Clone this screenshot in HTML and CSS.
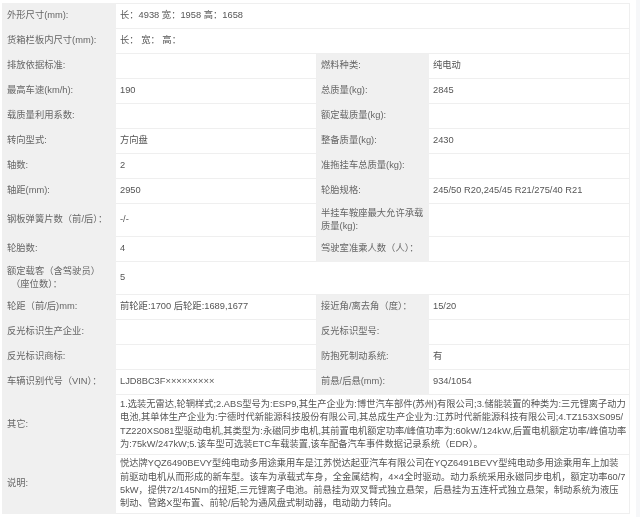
FILE: index.html
```html
<!DOCTYPE html>
<html lang="zh">
<head>
<meta charset="utf-8">
<title>车辆参数</title>
<link rel="stylesheet" href="styles.css">
</head>
<body>
<table class="spec">
<colgroup><col class="c1"><col class="c2"><col class="c3"><col class="c4"></colgroup>
<tr class="r25"><th>外形尺寸(mm):</th><td colspan="3">长：4938 宽：1958 高：1658</td></tr>
<tr class="r25"><th>货箱栏板内尺寸(mm):</th><td colspan="3">长： 宽： 高：</td></tr>
<tr class="r25"><th>排放依据标准:</th><td></td><th>燃料种类:</th><td>纯电动</td></tr>
<tr class="r25"><th>最高车速(km/h):</th><td>190</td><th>总质量(kg):</th><td>2845</td></tr>
<tr class="r25"><th>载质量利用系数:</th><td></td><th>额定载质量(kg):</th><td></td></tr>
<tr class="r25"><th>转向型式:</th><td>方向盘</td><th>整备质量(kg):</th><td>2430</td></tr>
<tr class="r25"><th>轴数:</th><td>2</td><th>准拖挂车总质量(kg):</th><td></td></tr>
<tr class="r25"><th>轴距(mm):</th><td>2950</td><th>轮胎规格:</th><td>245/50 R20,245/45 R21/275/40 R21</td></tr>
<tr class="r33"><th>钢板弹簧片数（前/后）：</th><td>-/-</td><th>半挂车鞍座最大允许承载<br>质量(kg):</th><td></td></tr>
<tr class="r25"><th>轮胎数:</th><td>4</td><th>驾驶室准乘人数（人）：</th><td></td></tr>
<tr class="r33"><th>额定载客（含驾驶员）<br><span class="indent">（座位数）：</span></th><td colspan="3">5</td></tr>
<tr class="r25"><th>轮距（前/后)mm:</th><td>前轮距:1700 后轮距:1689,1677</td><th>接近角/离去角（度）：</th><td>15/20</td></tr>
<tr class="r25"><th>反光标识生产企业:</th><td></td><th>反光标识型号:</th><td></td></tr>
<tr class="r25"><th>反光标识商标:</th><td></td><th>防抱死制动系统:</th><td>有</td></tr>
<tr class="r25"><th>车辆识别代号（VIN）：</th><td>LJD8BC3F×××××××××</td><th>前悬/后悬(mm):</th><td>934/1054</td></tr>
<tr class="r60"><th>其它:</th><td colspan="3" class="long">1.选装无雷达,轮辋样式;2.ABS型号为:ESP9,其生产企业为:博世汽车部件(苏州)有限公司;3.储能装置的种类为:三元锂离子动力<br>电池,其单体生产企业为:宁德时代新能源科技股份有限公司,其总成生产企业为:江苏时代新能源科技有限公司;4.TZ153XS095/<br>TZ220XS081型驱动电机,其类型为:永磁同步电机,其前置电机额定功率/峰值功率为:60kW/124kW,后置电机额定功率/峰值功率<br>为:75kW/247kW;5.该车型可选装ETC车载装置,该车配备汽车事件数据记录系统（EDR）。</td></tr>
<tr class="r59"><th>说明:</th><td colspan="3" class="long">悦达牌YQZ6490BEVY型纯电动多用途乘用车是江苏悦达起亚汽车有限公司在YQZ6491BEVY型纯电动多用途乘用车上加装<br>前驱动电机从而形成的新车型。该车为承载式车身，全金属结构，4×4全时驱动。动力系统采用永磁同步电机，额定功率60/7<br>5kW，提供72/145Nm的扭矩,三元锂离子电池。前悬挂为双叉臂式独立悬架，后悬挂为五连杆式独立悬架，制动系统为液压<br>制动、管路X型布置、前轮/后轮为通风盘式制动器，电动助力转向。</td></tr>
</table>
</body>
</html>
```
FILE: styles.css
```css
html, body {
  margin: 0;
  padding: 0;
  height: 517px;
  overflow: hidden;
}
html { background: #f6f7f9; }
body {
  width: 636px;
  padding: 3px 0 0 2px;
  box-sizing: border-box;
  background: #fff;
  font-family: "Liberation Sans", "Noto Sans CJK SC", sans-serif;
  color: #555;
}
.spec {
  border-collapse: collapse;
  table-layout: fixed;
  width: 627px;
  filter: blur(0.45px);
}
.c1 { width: 113px; }
.c2 { width: 201px; }
.c3 { width: 112px; }
.c4 { width: 201px; }
.spec th, .spec td {
  border: 1px solid #efefef;
  padding: 0 4px;
  font-weight: normal;
  font-size: 9.3px;
  line-height: 13.3px;
  text-align: left;
  vertical-align: middle;
  white-space: nowrap;
}
.spec td { background: #fff; }
.spec th { background: #f0f0f0; color: #666; border-color: #f0f0f0; }
.spec .long { font-size: 9.25px; }
.r25 { height: 25px; }
.r33 { height: 33px; }
.r60 { height: 60px; }
.r59 { height: 59px; }
.indent { padding-left: 4px; }
```
